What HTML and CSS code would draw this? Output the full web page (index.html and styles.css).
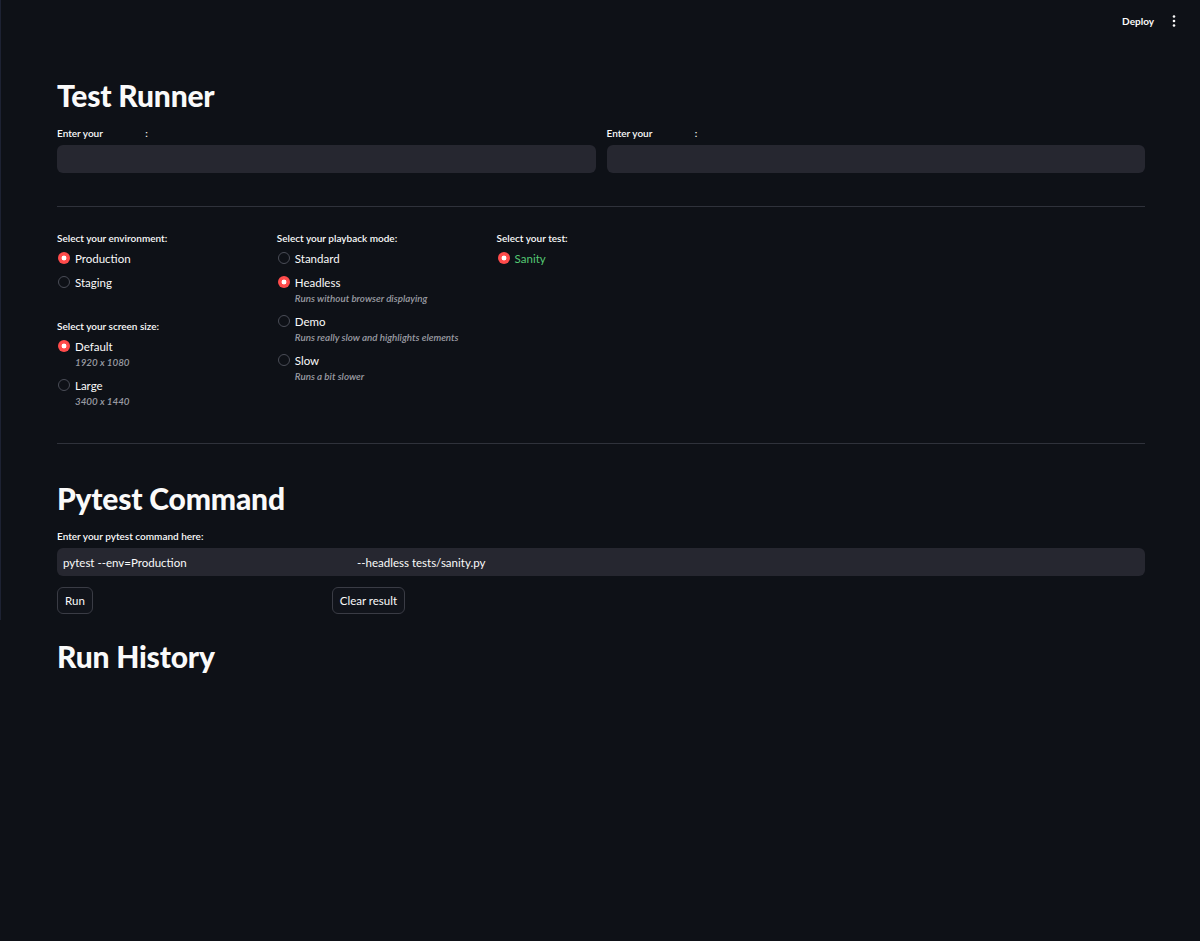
FILE: index.html
```html
<!DOCTYPE html>
<html lang="en">
<head>
    <meta charset="UTF-8">
    <meta name="viewport" content="width=device-width, initial-scale=1.0">
    <title>Test Runner</title>
    <link rel="stylesheet" href="styles.css">
</head>
<body>
    <header class="topbar">
        <span class="deploy">Deploy</span>
        <svg class="kebab" width="12" height="14" viewBox="0 0 12 14">
            <circle cx="6" cy="2.5" r="1.3" fill="#fafafa"/>
            <circle cx="6" cy="7" r="1.3" fill="#fafafa"/>
            <circle cx="6" cy="11.5" r="1.3" fill="#fafafa"/>
        </svg>
    </header>

    <main class="container">
        <h1>Test Runner</h1>

        <div class="two-cols">
            <div class="field">
                <label class="label">Enter your <span class="blank"></span>:</label>
                <div class="text-input"></div>
            </div>
            <div class="field">
                <label class="label">Enter your <span class="blank"></span>:</label>
                <div class="text-input"></div>
            </div>
        </div>

        <hr class="divider">

        <div class="options-grid">
            <div class="col">
                <div class="radio-group">
                    <div class="label">Select your environment:</div>
                    <div class="option"><span class="radio checked"></span><span>Production</span></div>
                    <div class="option"><span class="radio"></span><span>Staging</span></div>
                </div>
                <div class="radio-group spaced">
                    <div class="label">Select your screen size:</div>
                    <div class="option with-caption">
                        <div class="option-row"><span class="radio checked"></span><span>Default</span></div>
                        <div class="caption">1920 x 1080</div>
                    </div>
                    <div class="option with-caption">
                        <div class="option-row"><span class="radio"></span><span>Large</span></div>
                        <div class="caption">3400 x 1440</div>
                    </div>
                </div>
            </div>

            <div class="col">
                <div class="radio-group">
                    <div class="label">Select your playback mode:</div>
                    <div class="option"><span class="radio"></span><span>Standard</span></div>
                    <div class="option with-caption">
                        <div class="option-row"><span class="radio checked"></span><span>Headless</span></div>
                        <div class="caption">Runs without browser displaying</div>
                    </div>
                    <div class="option with-caption">
                        <div class="option-row"><span class="radio"></span><span>Demo</span></div>
                        <div class="caption">Runs really slow and highlights elements</div>
                    </div>
                    <div class="option with-caption">
                        <div class="option-row"><span class="radio"></span><span>Slow</span></div>
                        <div class="caption">Runs a bit slower</div>
                    </div>
                </div>
            </div>

            <div class="col">
                <div class="radio-group">
                    <div class="label">Select your test:</div>
                    <div class="option"><span class="radio checked"></span><span class="green">Sanity</span></div>
                </div>
            </div>
        </div>

        <hr class="divider">

        <h2>Pytest Command</h2>
        <div class="field command-field">
            <label class="label">Enter your pytest command here:</label>
            <div class="text-input command">
                <span class="cmd-part">pytest --env=Production</span>
                <span class="cmd-part">--headless tests/sanity.py</span>
            </div>
        </div>

        <div class="button-row">
            <div><button class="btn">Run</button></div>
            <div><button class="btn">Clear result</button></div>
            <div></div>
            <div></div>
        </div>

        <h2 class="history">Run History</h2>
    </main>
</body>
</html>
```

FILE: styles.css
```css
:root {
    --bg: #0e1117;
    --input-bg: #262730;
    --text: #fafafa;
    --muted: #9a9ca3;
    --border: #3a3c45;
    --red: #ff4b4b;
    --green: #55c974;
}

* {
    box-sizing: border-box;
}

body {
    margin: 0;
    background: var(--bg);
    color: var(--text);
    font-family: Lato, "Noto Sans", sans-serif;
    min-height: 100vh;
}

body::before {
    content: '';
    position: fixed;
    left: 0;
    top: 0;
    width: 1px;
    height: 620px;
    background: #1d2233;
}

.topbar {
    height: 42px;
    display: flex;
    justify-content: flex-end;
    align-items: center;
    gap: 14px;
    padding-right: 20px;
}

.deploy {
    font-size: 10px;
    font-weight: 700;
}

.kebab {
    display: block;
}

.container {
    padding: 0 55px 40px 57px;
}

h1, h2 {
    margin: 0;
    font-weight: 900;
    font-size: 30px;
    line-height: 36px;
    letter-spacing: -0.2px;
}

h1 {
    margin-top: 35px;
}

h2 {
    margin-top: 36px;
}

h2.history {
    margin-top: 24px;
}

.label {
    display: block;
    font-size: 10px;
    line-height: 14px;
    font-weight: 600;
}

.blank {
    display: inline-block;
    width: 40px;
}

.two-cols {
    display: grid;
    grid-template-columns: 1fr 1fr;
    gap: 11px;
    margin-top: 13px;
}

.command-field {
    margin-top: 13px;
}

.field .label {
    margin-bottom: 5px;
}

.text-input {
    height: 28px;
    background: var(--input-bg);
    border-radius: 6px;
}

.text-input.command {
    display: flex;
    align-items: center;
    padding-left: 6px;
    font-size: 11.5px;
}

.cmd-part:first-child {
    width: 294px;
}

.divider {
    border: none;
    border-top: 1px solid #2f323b;
    margin: 33px 0 0;
}

.options-grid {
    display: grid;
    grid-template-columns: repeat(5, 1fr);
    gap: 11px;
    margin-top: 24px;
}

.radio-group .label {
    margin-bottom: 3px;
}

.radio-group.spaced {
    margin-top: 27px;
}

.option,
.option-row {
    display: flex;
    align-items: center;
    gap: 5px;
    height: 20px;
    font-size: 11.5px;
    margin-bottom: 4px;
}

.option:last-child {
    margin-bottom: 0;
}

.option.with-caption {
    display: block;
    height: auto;
}

.option-row {
    margin-bottom: 0;
}

.caption {
    padding: 0 0 2px 18px;
    font-size: 9.8px;
    line-height: 13px;
    font-style: italic;
    font-weight: 600;
    color: var(--muted);
}

.radio {
    width: 12px;
    height: 12px;
    margin-left: 1px;
    border-radius: 50%;
    border: 1px solid #4a4d57;
    background: var(--bg);
    flex-shrink: 0;
}

.radio.checked {
    border: none;
    background: radial-gradient(circle, #fff 0 2.2px, var(--red) 2.7px);
}

.green {
    color: var(--green);
}

.button-row {
    display: grid;
    grid-template-columns: repeat(4, 1fr);
    gap: 11px;
    margin-top: 11px;
}

.btn {
    height: 27px;
    padding: 0 7px;
    background: #11141b;
    color: var(--text);
    border: 1px solid var(--border);
    border-radius: 6px;
    font-family: inherit;
    font-size: 11.5px;
}
```
